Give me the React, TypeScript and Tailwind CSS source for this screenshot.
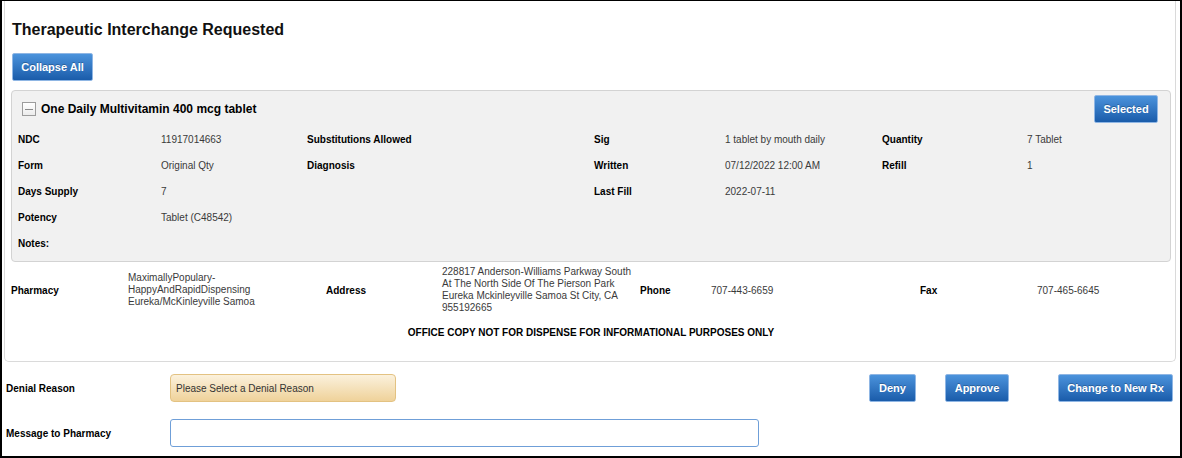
import React from 'react'

const btn =
  'flex items-center justify-center h-[28px] rounded-[2px] border border-[#8fb6e4] bg-gradient-to-b from-[#4b93dc] to-[#1a5caa] text-white font-bold text-[11px] [text-shadow:0_-1px_0_rgba(0,0,0,0.25)]'

type Cell = { label?: string; value?: string }

const rows: Cell[][] = [
  [
    { label: 'NDC', value: '11917014663' },
    { label: 'Substitutions Allowed' },
    { label: 'Sig', value: '1 tablet by mouth daily' },
    { label: 'Quantity', value: '7 Tablet' },
  ],
  [
    { label: 'Form', value: 'Original Qty' },
    { label: 'Diagnosis' },
    { label: 'Written', value: '07/12/2022 12:00 AM' },
    { label: 'Refill', value: '1' },
  ],
  [{ label: 'Days Supply', value: '7' }, {}, { label: 'Last Fill', value: '2022-07-11' }, {}],
  [{ label: 'Potency', value: 'Tablet (C48542)' }, {}, {}, {}],
  [{ label: 'Notes:' }, {}, {}, {}],
]

function Lines({ lines }: { lines: string[] }) {
  return (
    <div className="text-[10px] leading-[12px] text-[#3a3a3a] whitespace-nowrap">
      {lines.map((l, i) => (
        <div key={i}>{l}</div>
      ))}
    </div>
  )
}

export default function App() {
  return (
    <div className="w-[1182px] h-[458px] bg-white border-black border-t border-l-2 border-r-2 border-b-2 font-['Liberation_Sans',Arial,sans-serif] text-black overflow-hidden">
      {/* main panel */}
      <div className="ml-[2px] mr-[4px] h-[361px] border-x border-b border-[#dadada] rounded-b-[5px] pl-[6px] pr-[4px] pt-[20px]">
        <h1 className="h-[18px] leading-[18px] text-[16px] font-bold text-[#111] pl-px">
          Therapeutic Interchange Requested
        </h1>
        <button className={`${btn} mt-[14px] w-[81px] ml-px`}>Collapse All</button>

        {/* medication card */}
        <div className="mt-[9px] border border-[#d3d3d3] rounded-[4px] bg-[#f1f1f1] pt-[4px] pb-[5px]">
          <div className="flex items-center h-[28px] pl-[10px] pr-[12px]">
            <div className="w-[14px] h-[14px] border border-[#9c9c9c] bg-gradient-to-b from-white to-[#ececec] flex items-center justify-center">
              <div className="w-[8px] h-px bg-[#8a8a8a]" />
            </div>
            <span className="ml-[5px] text-[12px] font-bold">One Daily Multivitamin 400 mcg tablet</span>
            <button className={`${btn} ml-auto w-[64px]`}>Selected</button>
          </div>
          <div className="mt-[3px] pl-[6px]">
            {rows.map((row, i) => (
              <div
                key={i}
                className="grid grid-cols-[143px_146px_143px_144px_131px_157px_145px_1fr] h-[26px] items-center text-[10px]"
              >
                {row.map((c, j) => (
                  <React.Fragment key={j}>
                    <div className="font-bold">{c.label}</div>
                    <div className="text-[#3a3a3a]">{c.value}</div>
                  </React.Fragment>
                ))}
              </div>
            ))}
          </div>
        </div>

        {/* pharmacy */}
        <div className="mt-[4px] h-[48px] grid grid-cols-[117px_198px_116px_198px_71px_209px_117px_1fr] items-center text-[10px]">
          <div className="font-bold">Pharmacy</div>
          <Lines lines={['MaximallyPopulary-', 'HappyAndRapidDispensing', 'Eureka/McKinleyville Samoa']} />
          <div className="font-bold">Address</div>
          <Lines
            lines={[
              '228817 Anderson-Williams Parkway South',
              'At The North Side Of The Pierson Park',
              'Eureka Mckinleyville Samoa St City, CA',
              '955192665',
            ]}
          />
          <div className="font-bold">Phone</div>
          <div className="text-[#3a3a3a]">707-443-6659</div>
          <div className="font-bold">Fax</div>
          <div className="text-[#3a3a3a]">707-465-6645</div>
        </div>

        <div className="mt-[13px] h-[12px] leading-[12px] text-center text-[10px] font-bold">
          OFFICE COPY NOT FOR DISPENSE FOR INFORMATIONAL PURPOSES ONLY
        </div>
      </div>

      {/* actions */}
      <div className="pl-[4px] pr-[7px]">
        <div className="mt-[12px] flex items-center h-[28px]">
          <div className="w-[164px] text-[10px] font-bold">Denial Reason</div>
          <div className="w-[226px] h-[28px] flex items-center pl-[5px] rounded-[4px] border border-[#e3c282] bg-gradient-to-b from-[#fbf1dc] to-[#efd29a] text-[10px] text-[#333]">
            Please Select a Denial Reason
          </div>
          <button className={`${btn} ml-auto w-[47px]`}>Deny</button>
          <button className={`${btn} ml-[29px] w-[64px]`}>Approve</button>
          <button className={`${btn} ml-[49px] w-[115px]`}>Change to New Rx</button>
        </div>
        <div className="mt-[17px] flex items-center h-[28px]">
          <div className="w-[164px] text-[10px] font-bold">Message to Pharmacy</div>
          <input className="w-[589px] h-[28px] rounded-[3px] border border-[#6f9fd8] bg-white px-2 text-[10px] outline-none" />
        </div>
      </div>
    </div>
  )
}
